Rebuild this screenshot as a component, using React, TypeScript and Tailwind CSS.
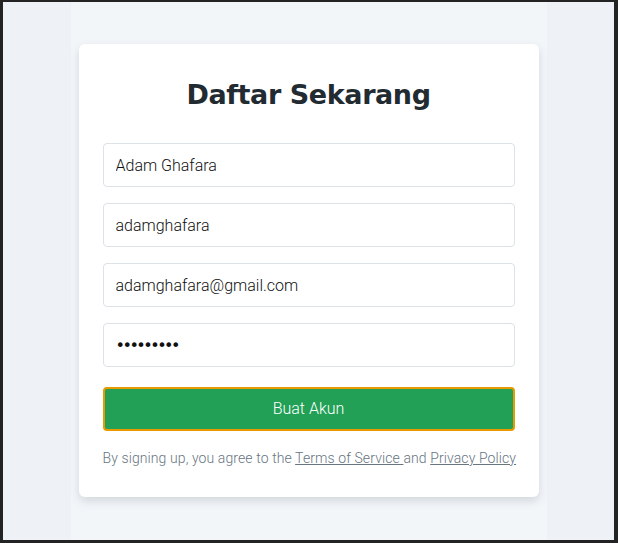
export default function App() {
  return (
    <div className="min-h-screen h-[543px] bg-[#eef2f6] border-l-[3px] border-t-2 border-r-4 border-b-[3px] border-[#232323] flex justify-center">
      <div className="w-[476px] h-full bg-[#f3f6f9] px-2 pt-[42px]">
        <div className="bg-white rounded-md shadow-[0_4px_10px_rgba(60,80,100,0.18)] px-6 pt-9 pb-[29px]" style={{ fontFamily: 'Roboto, sans-serif' }}>
          <h1 className="text-[27px] leading-8 font-bold text-center text-[#222b31] mb-[31px] tracking-[-0.4px] -translate-y-px" style={{ fontFamily: '"DejaVu Sans", sans-serif' }}>
            Daftar Sekarang
          </h1>
          <form className="flex flex-col gap-4">
            <input className="h-11 w-full rounded border border-[#dbe3e8] px-3 text-base font-light text-[#111] outline-none" defaultValue="Adam Ghafara" />
            <input className="h-11 w-full rounded border border-[#dbe3e8] px-3 text-base font-light text-[#111] outline-none" defaultValue="adamghafara" />
            <input className="h-11 w-full rounded border border-[#dbe3e8] px-3 text-base font-light text-[#111] outline-none" defaultValue="adamghafara@gmail.com" />
            <input type="password" className="h-11 w-full rounded border border-[#dbe3e8] px-3 text-base text-[#111] tracking-[-2.5px] outline-none" style={{ fontFamily: '"DejaVu Sans", sans-serif' }} defaultValue="123456789" />
            <button type="button" className="mt-1 h-11 w-full rounded border-2 border-[#e89a00] bg-[#21a056] text-white text-base font-light">
              Buat Akun
            </button>
          </form>
          <p className="mt-[17px] text-sm leading-5 text-center text-[#67757f] font-light tracking-[0.1px] whitespace-nowrap">
            By signing up, you agree to the <a href="#" className="underline">Terms of Service </a>and <a href="#" className="underline">Privacy Policy</a>
          </p>
        </div>
      </div>
    </div>
  );
}
